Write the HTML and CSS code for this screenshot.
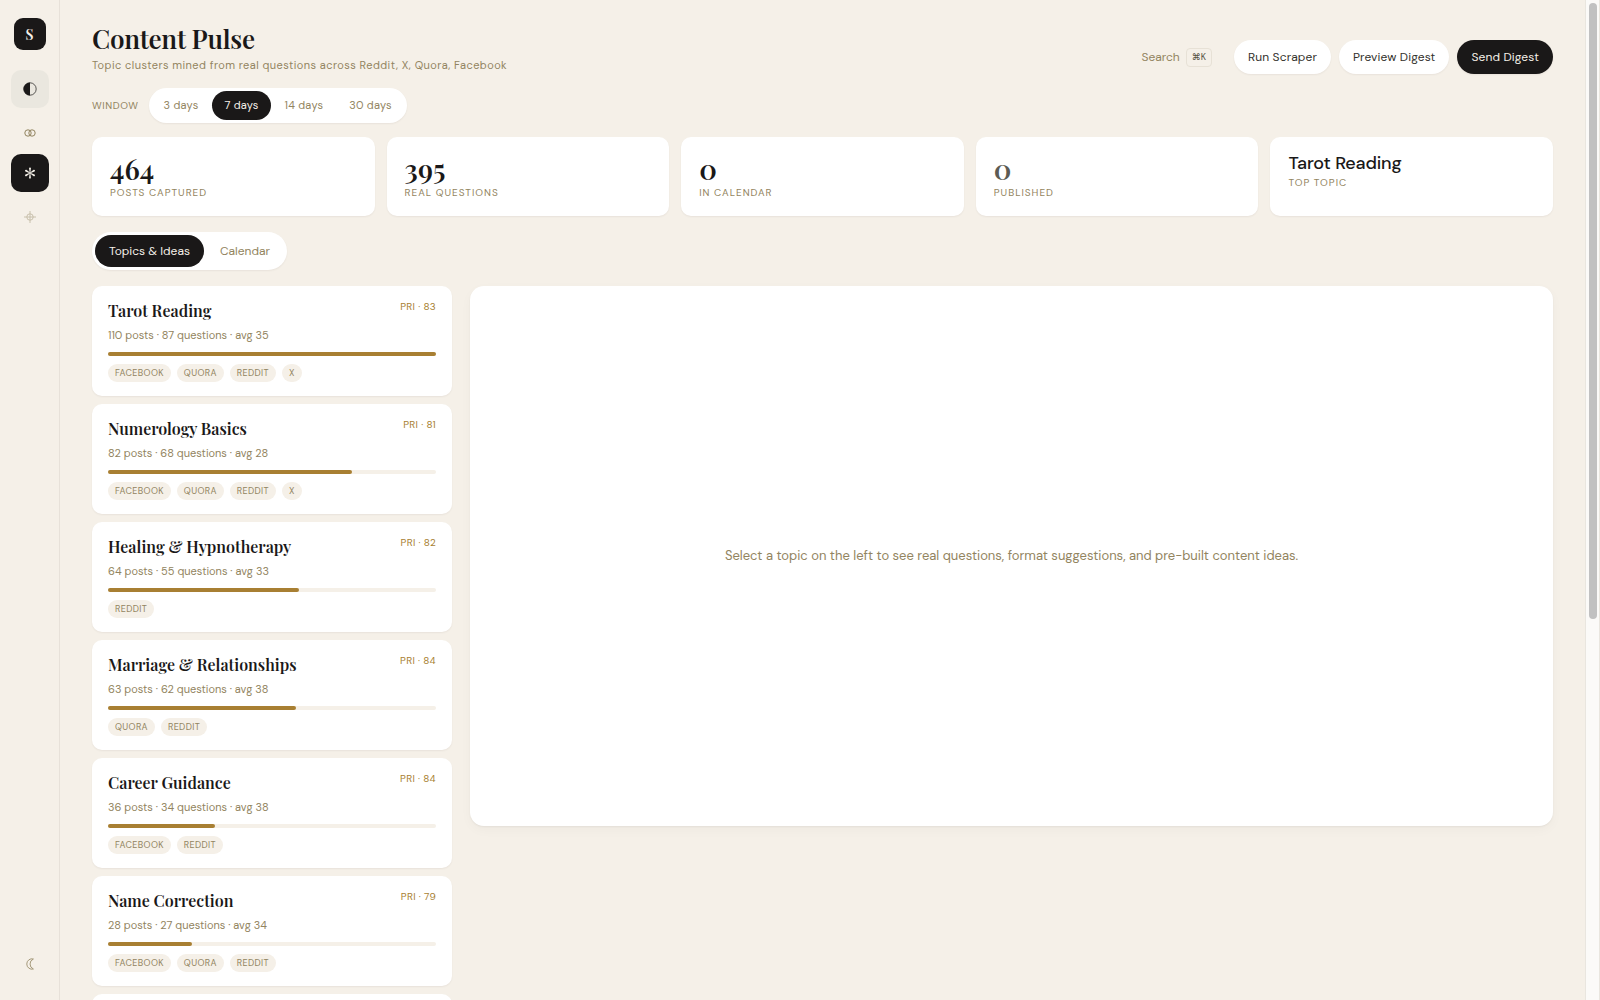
FILE: index.html
```html
<!DOCTYPE html>
<html lang="en">
<head>
<meta charset="utf-8">
<meta name="viewport" content="width=device-width, initial-scale=1">
<title>Content Pulse</title>
<link rel="stylesheet" href="styles.css">
</head>
<body>
<nav class="sidebar" aria-label="Main">
  <a class="logo" href="#">S</a>
  <a class="nav-item nav-item-soft" href="#" aria-label="Overview">
    <svg width="14" height="14" viewBox="0 0 14 14"><circle cx="7" cy="7" r="6.2" fill="none" stroke="currentColor" stroke-width=".7"/><path d="M7 .5a6.5 6.5 0 0 0 0 13z" fill="currentColor"/></svg>
  </a>
  <a class="nav-item nav-item-small" href="#" aria-label="Matches">
    <svg width="12" height="8" viewBox="0 0 12 8" fill="none" stroke="currentColor"><circle cx="4" cy="4" r="3.2"/><circle cx="8" cy="4" r="3.2"/></svg>
  </a>
  <a class="nav-item nav-item-active" href="#" aria-label="Content Pulse">
    <svg width="12" height="12" viewBox="0 0 12 12" fill="currentColor">
      <path id="petal" d="M5.700 6L5.100 1.300Q5 .4 6 .4T6.900 1.300L6.300 6z"/>
      <use href="#petal" transform="rotate(60 6 6)"/>
      <use href="#petal" transform="rotate(120 6 6)"/>
      <use href="#petal" transform="rotate(180 6 6)"/>
      <use href="#petal" transform="rotate(240 6 6)"/>
      <use href="#petal" transform="rotate(300 6 6)"/>
    </svg>
  </a>
  <a class="nav-item nav-item-faint" href="#" aria-label="Targets">
    <svg width="12" height="12" viewBox="0 0 12 12" fill="none" stroke="currentColor" stroke-width=".9"><circle cx="6" cy="6" r="3.2"/><path d="M6 0v12M0 6h12"/></svg>
  </a>
  <button class="theme" type="button" aria-label="Dark mode">
    <svg width="10" height="12" viewBox="0 0 10 12" fill="none" stroke="currentColor" stroke-width=".8"><path d="M8.400 1A5.200 5.200 0 1 0 8.400 11A5.400 5.400 0 0 1 8.400 1z"/></svg>
  </button>
</nav>

<main class="main">
  <header class="header">
    <div>
      <h1 class="title">Content Pulse</h1>
      <p class="subtitle">Topic clusters mined from real questions across Reddit, X, Quora, Facebook</p>
    </div>
    <div class="actions">
      <button class="search" type="button">Search <kbd class="kbd">⌘K</kbd></button>
      <button class="btn" type="button">Run Scraper</button>
      <button class="btn" type="button">Preview Digest</button>
      <button class="btn btn-dark" type="button">Send Digest</button>
    </div>
  </header>

  <div class="window">
    <span class="label window-label">Window</span>
    <div class="pills">
      <button class="pill" type="button">3 days</button>
      <button class="pill pill-on" type="button">7 days</button>
      <button class="pill" type="button">14 days</button>
      <button class="pill" type="button">30 days</button>
    </div>
  </div>

  <section class="stats">
    <div class="stat"><div class="stat-value">464</div><div class="label">Posts captured</div></div>
    <div class="stat"><div class="stat-value">395</div><div class="label">Real questions</div></div>
    <div class="stat"><div class="stat-value">0</div><div class="label">In calendar</div></div>
    <div class="stat"><div class="stat-value stat-muted">0</div><div class="label">Published</div></div>
    <div class="stat"><div class="stat-topic">Tarot Reading</div><div class="label">Top topic</div></div>
  </section>

  <div class="pills tabs">
    <button class="pill tab pill-on" type="button">Topics &amp; Ideas</button>
    <button class="pill tab" type="button">Calendar</button>
  </div>

  <div class="board">
    <div class="topics">
      <article class="topic">
        <div class="topic-head"><h2 class="topic-name">Tarot Reading</h2><span class="pri">PRI · 83</span></div>
        <p class="meta">110 posts · 87 questions · avg 35</p>
        <div class="bar"><div class="bar-fill" style="width:100%"></div></div>
        <div class="tags"><span class="tag">Facebook</span><span class="tag">Quora</span><span class="tag">Reddit</span><span class="tag">X</span></div>
      </article>
      <article class="topic">
        <div class="topic-head"><h2 class="topic-name">Numerology Basics</h2><span class="pri">PRI · 81</span></div>
        <p class="meta">82 posts · 68 questions · avg 28</p>
        <div class="bar"><div class="bar-fill" style="width:74.5%"></div></div>
        <div class="tags"><span class="tag">Facebook</span><span class="tag">Quora</span><span class="tag">Reddit</span><span class="tag">X</span></div>
      </article>
      <article class="topic">
        <div class="topic-head"><h2 class="topic-name">Healing &amp; Hypnotherapy</h2><span class="pri">PRI · 82</span></div>
        <p class="meta">64 posts · 55 questions · avg 33</p>
        <div class="bar"><div class="bar-fill" style="width:58.2%"></div></div>
        <div class="tags"><span class="tag">Reddit</span></div>
      </article>
      <article class="topic">
        <div class="topic-head"><h2 class="topic-name">Marriage &amp; Relationships</h2><span class="pri">PRI · 84</span></div>
        <p class="meta">63 posts · 62 questions · avg 38</p>
        <div class="bar"><div class="bar-fill" style="width:57.3%"></div></div>
        <div class="tags"><span class="tag">Quora</span><span class="tag">Reddit</span></div>
      </article>
      <article class="topic">
        <div class="topic-head"><h2 class="topic-name">Career Guidance</h2><span class="pri">PRI · 84</span></div>
        <p class="meta">36 posts · 34 questions · avg 38</p>
        <div class="bar"><div class="bar-fill" style="width:32.7%"></div></div>
        <div class="tags"><span class="tag">Facebook</span><span class="tag">Reddit</span></div>
      </article>
      <article class="topic">
        <div class="topic-head"><h2 class="topic-name">Name Correction</h2><span class="pri">PRI · 79</span></div>
        <p class="meta">28 posts · 27 questions · avg 34</p>
        <div class="bar"><div class="bar-fill" style="width:25.5%"></div></div>
        <div class="tags"><span class="tag">Facebook</span><span class="tag">Quora</span><span class="tag">Reddit</span></div>
      </article>
      <article class="topic"></article>
    </div>
    <section class="detail">
      <p class="empty">Select a topic on the left to see real questions, format suggestions, and pre-built content ideas.</p>
    </section>
  </div>
</main>

<div class="scroll" aria-hidden="true"><div class="scroll-thumb"></div></div>
</body>
</html>
```
FILE: styles.css
```css
:root {
  --bg: #f5f0e8;
  --ink: #1a1818;
  --muted: #928460;
  --gold: #a87f32;
  --shadow: 0 1px 2px rgba(26, 24, 24, .06);
  --sans: "DM Sans", Inter, sans-serif;
  --serif: "Playfair Display", "Liberation Serif", serif;
}
* { box-sizing: border-box; }
body {
  margin: 0;
  height: 100vh;
  display: flex;
  overflow: hidden;
  background: var(--bg);
  color: var(--ink);
  font-family: var(--sans);
  font-size: 12px;
}
h1, h2, p { margin: 0; }
button {
  border: 0;
  padding: 0;
  background: none;
  color: inherit;
  font: inherit;
  cursor: pointer;
  white-space: nowrap;
}
a { color: inherit; text-decoration: none; }
svg { display: block; }

.sidebar {
  width: 60px;
  flex: none;
  display: flex;
  flex-direction: column;
  align-items: center;
  padding: 18px 0;
  border-right: 1px solid #e7e1d9;
}
.logo {
  width: 32px;
  height: 32px;
  margin-bottom: 20px;
  border-radius: 9px;
  background: var(--ink);
  color: var(--bg);
  display: grid;
  place-items: center;
  font: 600 14px var(--serif);
}
.nav-item {
  width: 38px;
  height: 38px;
  margin-bottom: 5px;
  border-radius: 10px;
  display: grid;
  place-items: center;
}
.nav-item-soft { background: #eae7df; margin-bottom: 6px; }
.nav-item-small { color: var(--muted); margin-bottom: 2px; }
.nav-item-active { background: var(--ink); color: var(--bg); margin-bottom: 6px; }
.nav-item-faint { color: #c4bba6; }
.theme { margin-top: auto; padding: 12px; color: var(--muted); }

.main {
  flex: 1;
  min-width: 0;
  overflow: hidden;
  padding: 22px 32px 0;
}
.header {
  display: flex;
  justify-content: space-between;
  align-items: flex-end;
  margin-bottom: 14px;
}
.title { font: 600 26px/34px var(--serif); letter-spacing: -.01em; }
.subtitle { color: var(--muted); font-size: 11px; line-height: 18px; letter-spacing: .04em; }
.actions { display: flex; align-items: center; gap: 8px; }
.search {
  display: flex;
  align-items: center;
  gap: 6px;
  margin-right: 14px;
  color: var(--muted);
}
.kbd {
  padding: 0 5px;
  border: 1px solid #e7e1d6;
  border-radius: 4px;
  color: #55503f;
  font: 9px/17px var(--sans);
}
.btn {
  padding: 0 14px;
  border-radius: 17px;
  background: #fff;
  box-shadow: var(--shadow);
  color: #33312c;
  line-height: 34px;
  letter-spacing: .01em;
}
.btn-dark { background: var(--ink); color: var(--bg); }

.window { display: flex; align-items: center; gap: 10px; margin-bottom: 14px; }
.label {
  color: var(--muted);
  font-size: 10px;
  line-height: 14px;
  letter-spacing: .1em;
  text-transform: uppercase;
}
.window-label { letter-spacing: .06em; }
.pills {
  display: flex;
  gap: 2px;
  width: max-content;
  padding: 3px;
  border-radius: 20px;
  background: #fff;
  box-shadow: var(--shadow);
}
.pill {
  padding: 0 12px;
  border-radius: 16px;
  color: var(--muted);
  font-size: 11px;
  line-height: 29px;
  letter-spacing: .02em;
}
.pill-on { background: var(--ink); color: var(--bg); }

.stats {
  display: grid;
  grid-template-columns: repeat(5, 1fr);
  gap: 12px;
  margin-bottom: 16px;
}
.stat {
  min-height: 79px;
  padding: 14px 18px;
  border-radius: 10px;
  background: #fff;
  box-shadow: var(--shadow);
}
.stat-value { font: 600 28px/35px var(--serif); }
.stat-muted { color: #5c5b53; }
.stat-topic { font-size: 18px; font-weight: 500; line-height: 25px; letter-spacing: -.01em; }

.tabs { margin-bottom: 16px; }
.tab { padding: 0 14px; font-size: 12px; line-height: 32px; letter-spacing: 0; }

.board {
  display: grid;
  grid-template-columns: 360px 1fr;
  gap: 18px;
  align-items: start;
}
.topics { display: grid; gap: 8px; }
.topic {
  min-height: 110px;
  padding: 14px 16px;
  border-radius: 10px;
  background: #fff;
  box-shadow: var(--shadow);
}
.topic-head { display: flex; justify-content: space-between; }
.topic-name { font: 600 16px/22px var(--serif); }
.pri { color: var(--gold); font-size: 10px; line-height: 14px; letter-spacing: .03em; }
.meta { margin-top: 5px; color: var(--muted); font-size: 11px; line-height: 16px; }
.bar { height: 4px; margin: 9px 0 8px; border-radius: 2px; background: var(--bg); }
.bar-fill { height: 4px; border-radius: 2px; background: var(--gold); }
.tags { display: flex; gap: 6px; }
.tag {
  padding: 0 7px;
  border-radius: 9px;
  background: var(--bg);
  color: var(--muted);
  font-size: 9px;
  line-height: 18px;
  letter-spacing: .04em;
  text-transform: uppercase;
}
.detail {
  min-height: 540px;
  padding: 24px;
  display: grid;
  place-items: center;
  border-radius: 14px;
  background: #fff;
  box-shadow: 0 1px 2px rgba(26, 24, 24, .05), 0 4px 12px rgba(26, 24, 24, .03);
}
.empty { color: var(--muted); font-size: 13px; line-height: 20px; }

.scroll {
  width: 15px;
  flex: none;
  padding: 3px;
  border: 1px solid #e9e6df;
  border-width: 0 1px;
  background: #fbfaf8;
}
.scroll-thumb { width: 8px; height: 62%; border-radius: 4px; background: #c1c1c1; }
```
